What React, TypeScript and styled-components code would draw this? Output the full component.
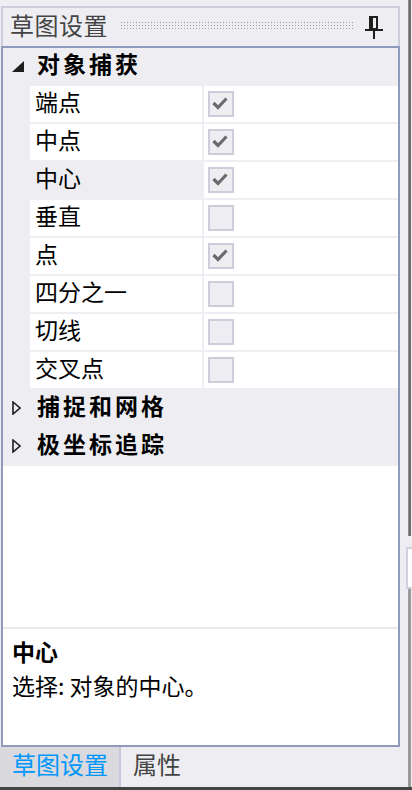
import styled, { createGlobalStyle } from 'styled-components';

const GlobalStyle = createGlobalStyle`
  html, body {
    margin: 0;
    padding: 0;
    background: #eeeef2;
    font-family: "Noto Sans CJK SC", "Liberation Sans", sans-serif;
  }
`;

type Item = { name: string; checked: boolean; selected?: boolean };

const snapItems: Item[] = [
  { name: '端点', checked: true },
  { name: '中点', checked: true },
  { name: '中心', checked: true, selected: true },
  { name: '垂直', checked: false },
  { name: '点', checked: true },
  { name: '四分之一', checked: false },
  { name: '切线', checked: false },
  { name: '交叉点', checked: false },
];

const PinIcon = () => (
  <svg width="18" height="23" viewBox="0 0 18 23">
    <path d="M5 1h7v12H5z" fill="none" stroke="#1e1e1e" strokeWidth="2" />
    <rect x="5" y="1" width="3" height="12" fill="#1e1e1e" />
    <rect x="0" y="13" width="18" height="2" fill="#1e1e1e" />
    <rect x="8" y="15" width="2" height="8" fill="#1e1e1e" />
  </svg>
);

const Expander = ({ open }: { open: boolean }) =>
  open ? (
    <svg width="12" height="11" viewBox="0 0 12 11">
      <path d="M12 0V11H0z" fill="#1e1e1e" />
    </svg>
  ) : (
    <svg width="9" height="14" viewBox="0 0 9 14">
      <path d="M1 1L8 7L1 13z" fill="none" stroke="#1e1e1e" strokeWidth="1.6" />
    </svg>
  );

const CheckBox = ({ checked }: { checked: boolean }) => (
  <Box>
    {checked && (
      <svg width="22" height="22" viewBox="0 0 22 22">
        <polyline points="3.5,10 8,14.5 16.5,5.5" fill="none" stroke="#6b6b6b" strokeWidth="3.2" />
      </svg>
    )}
  </Box>
);

const Category = ({ title, open }: { title: string; open: boolean }) => (
  <CategoryRow>
    <Margin>
      <Expander open={open} />
    </Margin>
    <CategoryTitle>{title}</CategoryTitle>
  </CategoryRow>
);

const App = () => {
  return (
    <>
      <GlobalStyle />
      <Page>
        <Window>
          <TitleBar>
            <Title>草图设置</Title>
            <Grip />
            <PinIcon />
          </TitleBar>
          <Panel>
            <Grid>
              <Category title="对象捕获" open />
              {snapItems.map((it) => (
                <PropRow key={it.name}>
                  <Margin />
                  <NameCell $selected={it.selected}>{it.name}</NameCell>
                  <ValueCell>
                    <CheckBox checked={it.checked} />
                  </ValueCell>
                </PropRow>
              ))}
              <Category title="捕捉和网格" open={false} />
              <Category title="极坐标追踪" open={false} />
            </Grid>
            <Empty />
            <Description>
              <DescTitle>中心</DescTitle>
              <DescText>选择: 对象的中心。</DescText>
            </Description>
          </Panel>
          <TabBar>
            <Tab $active>草图设置</Tab>
            <Tab>属性</Tab>
          </TabBar>
        </Window>
        <SideStrip>
          <DarkLine />
          <SideBox />
          <GrayLine />
        </SideStrip>
      </Page>
      <BottomBar />
    </>
  );
};

const Page = styled.div`
  display: flex;
  height: 787px;
  padding-left: 1px;
`;

const Window = styled.div`
  width: 399px;
  display: flex;
  flex-direction: column;
  padding-top: 6px;
`;

const TitleBar = styled.div`
  height: 38px;
  flex-shrink: 0;
  border: 2px solid #cccedb;
  border-bottom: none;
  display: flex;
  align-items: center;
  padding: 0 15px 0 7px;
  gap: 12px;
`;

const Title = styled.div`
  font-size: 24px;
  line-height: 1;
  color: #444;
  letter-spacing: 0.5px;
  padding-bottom: 4px;
`;

const Grip = styled.div`
  flex: 1;
  height: 9px;
  margin-bottom: 3px;
  background-image: radial-gradient(circle, #9c9c9c 0.7px, transparent 0.9px);
  background-size: 3px 3px;
`;

const Panel = styled.div`
  flex: 1;
  border: 2px solid #8e9bbc;
  background: #fff;
  display: flex;
  flex-direction: column;
`;

const Grid = styled.div`
  background: #eeeef2;
  display: flex;
  flex-direction: column;
  gap: 2px;
  padding-bottom: 2px;
`;

const CategoryRow = styled.div`
  display: flex;
  height: 36px;
  align-items: center;
`;

const Margin = styled.div`
  width: 27px;
  height: 100%;
  flex-shrink: 0;
  display: flex;
  align-items: center;
  padding-left: 9px;
  box-sizing: border-box;
`;

const CategoryTitle = styled.div`
  font-size: 23px;
  font-weight: 700;
  line-height: 1;
  letter-spacing: 3px;
  padding-left: 7px;
  padding-bottom: 5px;
  color: #000;
`;

const PropRow = styled.div`
  display: flex;
  height: 36px;
  gap: 2px;
`;

const NameCell = styled.div<{ $selected?: boolean }>`
  width: 172px;
  margin-left: -2px;
  background: ${(p) => (p.$selected ? '#eeeef2' : '#fff')};
  display: flex;
  align-items: center;
  padding: 0 0 5px 5px;
  box-sizing: border-box;
  font-size: 23px;
  line-height: 1;
  color: #000;
`;

const ValueCell = styled.div`
  flex: 1;
  background: #fff;
  display: flex;
  align-items: center;
  padding-left: 4px;
`;

const Box = styled.div`
  width: 22px;
  height: 22px;
  border: 2px solid #cbcdda;
  background: #eeeef2;
  display: flex;
`;

const Empty = styled.div`
  flex: 1;
  border-bottom: 2px solid #e8e8ee;
`;

const Description = styled.div`
  height: 116px;
  padding: 4px 9px 0;
  box-sizing: border-box;
`;

const DescTitle = styled.div`
  font-size: 23px;
  line-height: 36px;
  font-weight: 700;
  color: #000;
`;

const DescText = styled.div`
  font-size: 23px;
  line-height: 32px;
  color: #000;
`;

const TabBar = styled.div`
  height: 40px;
  flex-shrink: 0;
  display: flex;
  margin-left: -1px;
`;

const Tab = styled.div<{ $active?: boolean }>`
  display: flex;
  align-items: center;
  padding: 0 11px 6px 12px;
  font-size: 24px;
  line-height: 1;
  color: ${(p) => (p.$active ? '#0097fb' : '#444')};
  background: ${(p) => (p.$active ? '#d9d9de' : 'transparent')};
  border-right: ${(p) => (p.$active ? '2px solid #c6c9db' : 'none')};
`;

const SideStrip = styled.div`
  width: 12px;
  display: flex;
  flex-direction: column;
  align-items: flex-end;
  padding-right: 1px;
  box-sizing: border-box;
`;

const DarkLine = styled.div`
  width: 3px;
  height: 536px;
  background: #6b6b6b;
  border-left: 1px solid #8c8c8c;
  box-sizing: border-box;
`;

const SideBox = styled.div`
  width: 4px;
  height: 38px;
  margin-top: 11px;
  margin-right: -1px;
  border: 2px solid #cfd1de;
  border-right: none;
  background: #fff;
`;

const GrayLine = styled.div`
  width: 3px;
  flex: 1;
  background: #9a9a9a;
`;

const BottomBar = styled.div`
  height: 3px;
  background: #444;
`;

export default App;
